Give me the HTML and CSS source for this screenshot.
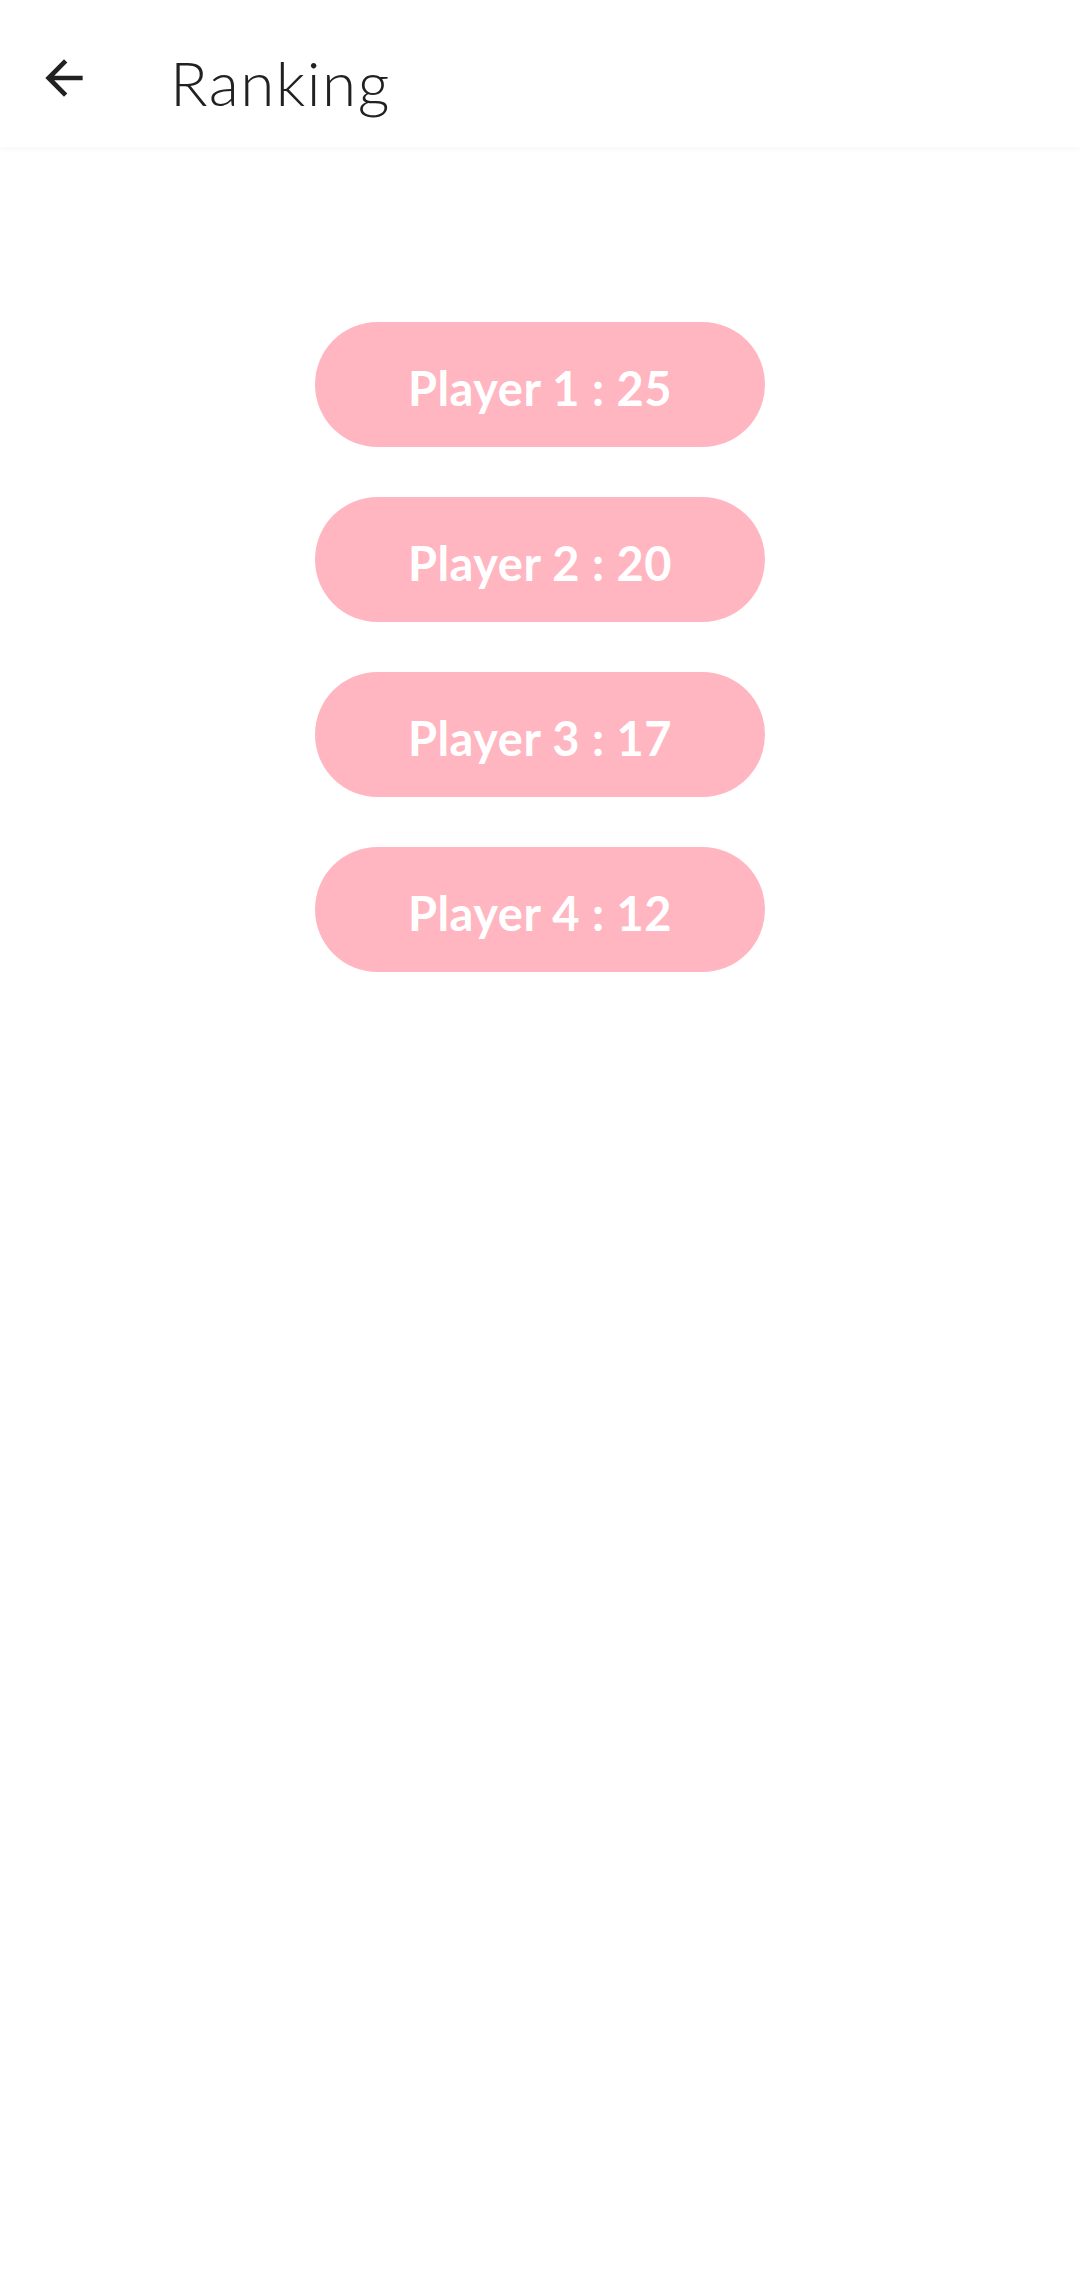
FILE: index.html
```html
<!DOCTYPE html>
<html>
<head>
<meta charset="utf-8">
<link rel="stylesheet" href="styles.css">
</head>
<body>
<header class="appbar">
  <svg class="back" viewBox="0 0 24 24" width="56" height="56"><path d="M20 11H7.83l5.59-5.59L12 4l-8 8 8 8 1.41-1.41L7.83 13H20v-2z" fill="#212121"/></svg>
  <h1 class="title">Ranking</h1>
</header>
<main class="list">
  <div class="pill">Player 1 : 25</div>
  <div class="pill">Player 2 : 20</div>
  <div class="pill">Player 3 : 17</div>
  <div class="pill">Player 4 : 12</div>
</main>
</body>
</html>
```
FILE: styles.css
```css
html, body {
  margin: 0;
  padding: 0;
  background: #ffffff;
  width: 1080px;
  height: 2287px;
  overflow: hidden;
  font-family: "Lato", "Noto Sans", sans-serif;
}
.appbar {
  height: 147px;
  display: flex;
  align-items: center;
  background: #ffffff;
  box-shadow: 0 2px 6px rgba(0,0,0,0.04);
  position: relative;
}
.back {
  margin-left: 36px;
  margin-top: 8px;
  flex: none;
}
.title {
  margin: 0 0 0 78px;
  font-weight: 300;
  font-size: 62px;
  color: #212121;
  letter-spacing: 1.5px;
  position: relative;
  top: 8px;
}
.list {
  display: flex;
  flex-direction: column;
  align-items: center;
  gap: 50px;
  padding-top: 175px;
}
.pill {
  width: 450px;
  height: 125px;
  border-radius: 62.5px;
  background: #ffb6c1;
  color: #ffffff;
  font-size: 47px;
  font-weight: 700;
  display: flex;
  align-items: center;
  justify-content: center;
  padding-top: 6px;
  box-sizing: border-box;
  letter-spacing: 0.5px;
}
```
